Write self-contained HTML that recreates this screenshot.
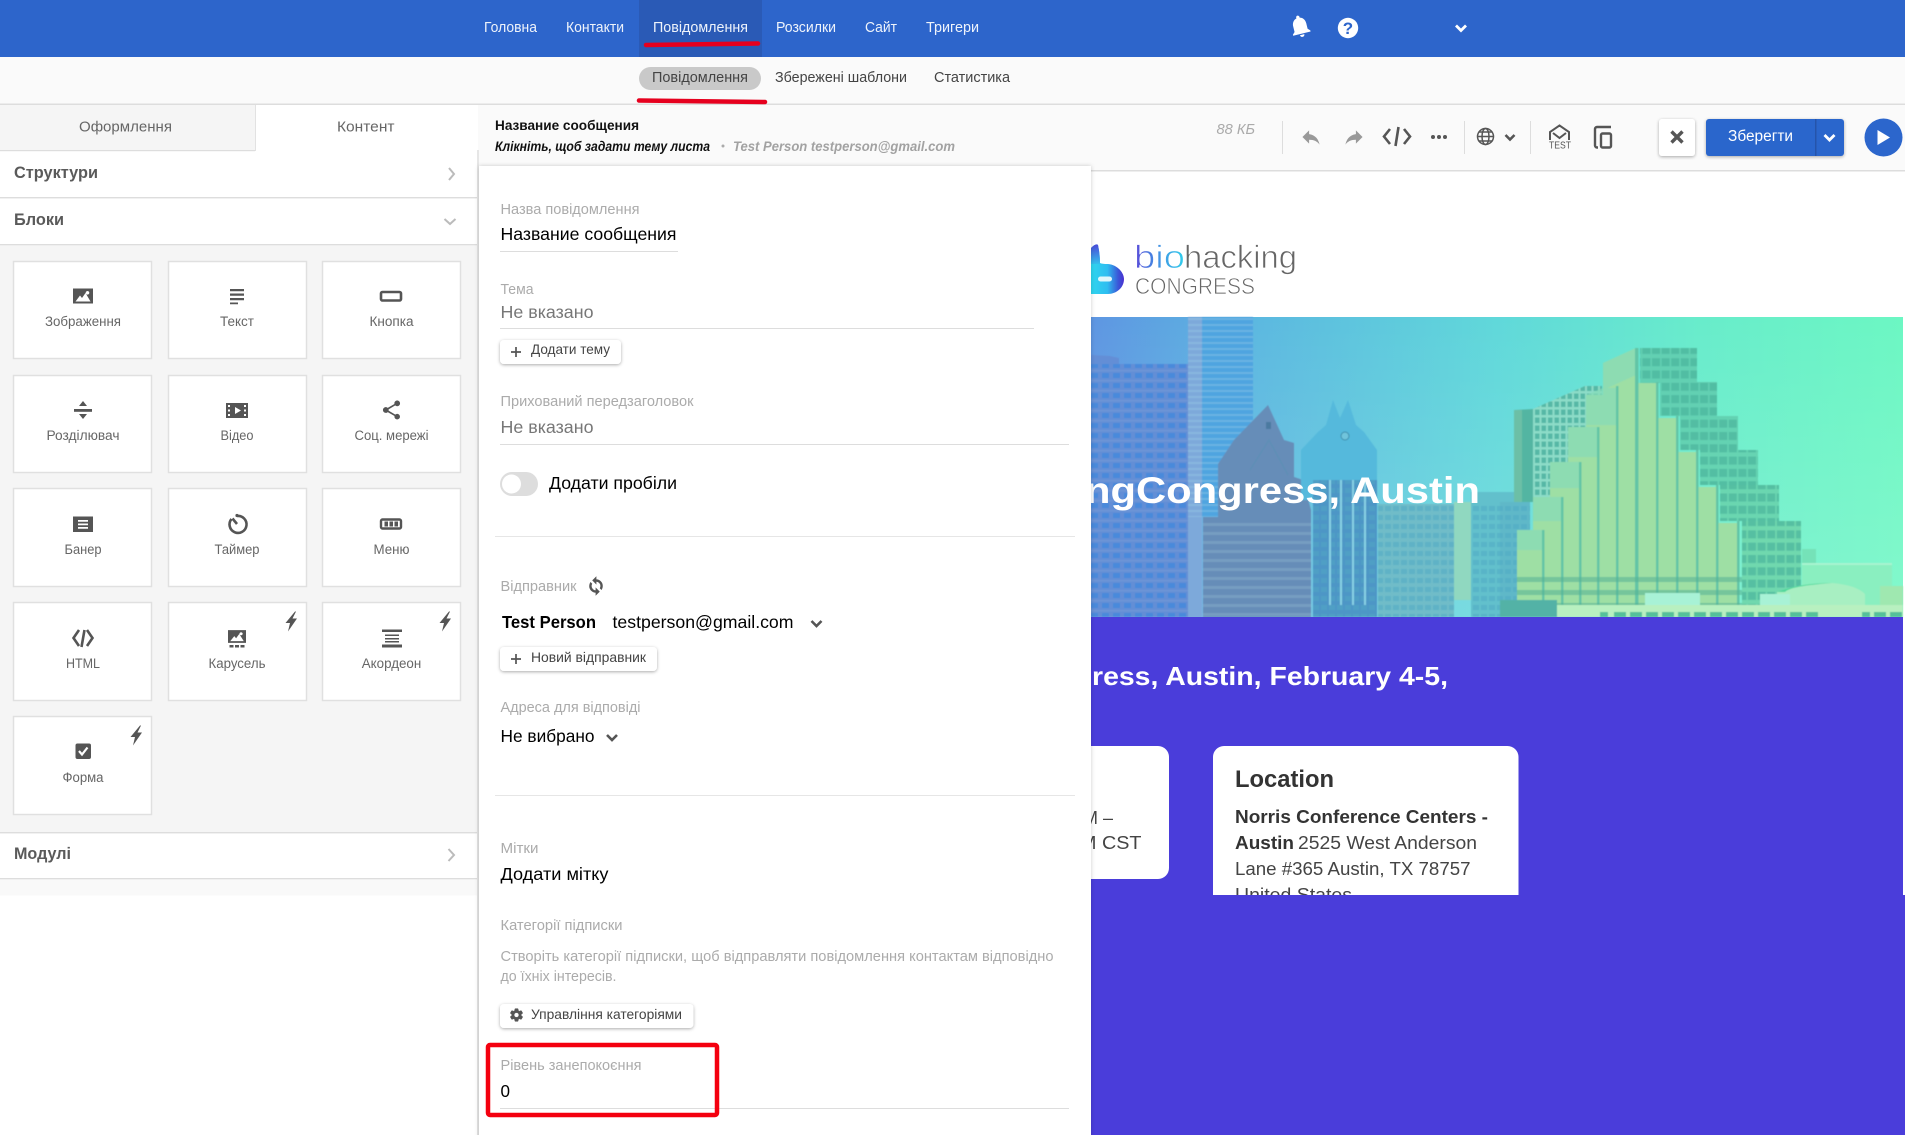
<!DOCTYPE html>
<html lang="uk">
<head>
<meta charset="utf-8">
<title>Повідомлення</title>
<style>
html,body{margin:0;padding:0;width:1905px;height:1135px;overflow:hidden;background:#fff}
svg{display:block}
text{font-family:"Liberation Sans",sans-serif;white-space:pre}
.nav{font-size:15px;fill:#eef3fb}
.sub{font-size:15px;fill:#444}
.tab{font-size:15px;fill:#666}
.h{font-size:17px;font-weight:bold;fill:#5a5a5a}
.c{font-size:13.4px;fill:#666}
.l{font-size:14.6px;fill:#ababab}
.v{font-size:17.5px;fill:#000}
.g{font-size:17.5px;fill:#777}
.b{font-size:13.6px;fill:#444}
.i{fill:#555}
.st{fill:none;stroke:#555;stroke-width:2}
.card{fill:#fff;stroke:#e0e0e0;stroke-width:1.5}
.ch{fill:none;stroke:#555;stroke-width:2.6}
.e{font-size:18px;fill:#444}
.eb{font-size:18px;font-weight:bold;fill:#333}
</style>
</head>
<body>
<svg width="1905" height="1135" viewBox="0 0 1905 1135" xmlns="http://www.w3.org/2000/svg">
<defs>
<filter id="s" x="-20%" y="-30%" width="140%" height="170%"><feDropShadow dx="0" dy="1" stdDeviation="1.5" flood-color="#000" flood-opacity=".33"/></filter>
<filter id="p" x="-3%" y="-3%" width="106%" height="106%"><feDropShadow dx="0" dy="0" stdDeviation="2" flood-color="#000" flood-opacity=".2"/></filter>
<filter id="soft" x="-2%" y="-2%" width="104%" height="104%"><feGaussianBlur stdDeviation=".6"/></filter>
<linearGradient id="hg" x1="0" y1="0" x2="1" y2="0"><stop offset="0" stop-color="#5e96e2"/><stop offset=".2" stop-color="#5cb8e0"/><stop offset=".5" stop-color="#60d8da"/><stop offset=".75" stop-color="#68eccb"/><stop offset="1" stop-color="#6cf7c3"/></linearGradient>
<linearGradient id="wash" x1="0" y1="0" x2="0" y2="1"><stop offset="0" stop-color="#fff" stop-opacity="0"/><stop offset="1" stop-color="#fff" stop-opacity=".16"/></linearGradient>
<linearGradient id="bio" x1="0" y1="0" x2="1" y2="0"><stop offset="0" stop-color="#5a46d8"/><stop offset=".3" stop-color="#4a7ae0"/><stop offset="1" stop-color="#30d0ec"/></linearGradient>
<linearGradient id="lg" x1="0" y1="0" x2="1" y2="0"><stop offset="0" stop-color="#2fd6ef"/><stop offset=".5" stop-color="#2fbdf0"/><stop offset=".82" stop-color="#3a58d8"/><stop offset="1" stop-color="#4a2fd0"/></linearGradient>
<linearGradient id="lg2" x1="0" y1="0" x2="0" y2="1"><stop offset="0" stop-color="#4a48d8"/><stop offset="1" stop-color="#34c0ee"/></linearGradient>
<pattern id="w1" width="11" height="10" patternUnits="userSpaceOnUse"><rect x="2" y="3" width="7" height="5" fill="#3f88dc" opacity=".75"/><rect x="0" y="0" width="11" height="1.2" fill="#7fa5d8" opacity=".4"/></pattern>
<pattern id="w2" width="20" height="9" patternUnits="userSpaceOnUse"><rect y="1" width="20" height="3" fill="#9cc4d8" opacity=".3"/></pattern>
<pattern id="w2b" width="20" height="6" patternUnits="userSpaceOnUse"><rect y="0" width="20" height="2" fill="#a8d8ec" opacity=".3"/></pattern>
<pattern id="w3" width="6.5" height="8" patternUnits="userSpaceOnUse"><rect x="1" y="1.500" width="4.500" height="5.500" fill="#3fa898" opacity=".7"/></pattern>
<pattern id="w4" width="9.600" height="12.300" patternUnits="userSpaceOnUse"><rect x=".8" y="1.500" width="8" height="8" fill="#48b39c" opacity=".65"/></pattern>
<pattern id="w5" width="8" height="9" patternUnits="userSpaceOnUse"><rect x="1" y="2" width="6" height="5" fill="#4fa8c4" opacity=".5"/></pattern>
<pattern id="b1" width="18" height="13" patternUnits="userSpaceOnUse"><rect y="5" width="18" height="5" fill="#58b494" opacity=".6"/></pattern>
<path id="bolt" d="M4.500-10 L-5 1.500 H-.5 L-2.500 10 L6.500-3 H2 L5.500-10Z"/>
<path id="pic" d="M-10-7.5 H10 V7.5 H-10Z M-7.500 5.500 H7.500 L2.500-3 L-1 2 L-3-.5Z M4.500-5 a1.800 1.800 0 1 0 .010 0Z" fill-rule="evenodd"/>
</defs>

<!-- email preview -->
<rect x="1091" y="171" width="812" height="146" fill="#fff"/>
<g>
<path d="M1091 248 Q1096 243 1098 245 Q1100 254 1100 263 Q1102 264 1108 264 C1118 265 1124 273 1124 279 C1124 288 1116 294 1108 294 H1091Z" fill="url(#lg)"/>
<path d="M1091 248 Q1096 243 1098 245 Q1100 254 1100 264 H1091Z" fill="url(#lg2)"/>
<rect x="1098" y="276.500" width="14" height="5" rx="2.500" fill="#dff6fb"/>
<text x="1134" y="268" font-size="32" textLength="51" lengthAdjust="spacingAndGlyphs" fill="url(#bio)" stroke="#fff" stroke-width=".8">bio</text>
<text x="1184" y="268" font-size="32" textLength="113" lengthAdjust="spacingAndGlyphs" fill="#666" stroke="#fff" stroke-width=".8">hacking</text>
<text x="1135" y="294" font-size="23" textLength="120" lengthAdjust="spacingAndGlyphs" fill="#666" stroke="#fff" stroke-width=".7">CONGRESS</text>
</g>
<!-- hero -->
<rect x="1091" y="317" width="812" height="300" fill="url(#hg)"/>
<rect x="1091" y="317" width="812" height="300" fill="url(#wash)"/>
<g filter="url(#soft)">
<!-- left block -->
<path d="M1091 355 L1110 356 L1119 358 V364 H1188 V617 H1091Z" fill="#648ed6"/>
<rect x="1091" y="364" width="97" height="253" fill="url(#w1)"/>
<!-- tall tower -->
<rect x="1188" y="317" width="14" height="300" fill="#7da9da"/>
<rect x="1202" y="317" width="51" height="200" fill="#4fa4e0"/>
<rect x="1188" y="317" width="65" height="200" fill="url(#w2b)"/>
<!-- pyramid -->
<path d="M1203 617 V517 H1218 V464 L1234 440 L1268 405 L1284 440 L1294 443 V477 L1303 480 L1311 510 V617Z" fill="#668db8"/>
<rect x="1203" y="517" width="108" height="100" fill="url(#w2)"/>
<path d="M1250 470 L1269 440 L1288 475" fill="none" stroke="#5f8fb6" stroke-width="1.500"/>
<rect x="1266" y="422" width="5" height="7" fill="#4c7aa0"/>
<!-- frost tower -->
<path d="M1301 450 L1318 432 L1326 425 L1333 400 L1340 418 L1348 400 L1356 425 L1364 432 L1377 450 V517 H1313 V500 H1301Z" fill="#55b9dc"/>
<rect x="1313" y="480" width="64" height="137" fill="#4e96c6"/>
<rect x="1313" y="480" width="64" height="137" fill="url(#w5)"/>
<rect x="1329" y="480" width="2" height="125" fill="#88d0e4"/><rect x="1340" y="480" width="2" height="125" fill="#88d0e4"/><rect x="1352" y="480" width="2" height="125" fill="#88d0e4"/><rect x="1364" y="480" width="2" height="125" fill="#88d0e4"/>
<circle cx="1345" cy="436" r="4" fill="#6fc4dc" stroke="#3f8fae" stroke-width="1"/>
<!-- mid -->
<rect x="1378" y="504" width="76" height="113" fill="#6fbcc8"/>
<rect x="1378" y="504" width="76" height="113" fill="url(#w5)"/>
<rect x="1454" y="502" width="17" height="98" fill="#90d8c0"/>
<rect x="1471" y="492" width="45" height="125" fill="#62c0cc"/>
<rect x="1471" y="505" width="45" height="112" fill="url(#w5)"/>
<rect x="1500" y="502" width="30" height="100" fill="#5fb8c8"/>
<rect x="1500" y="502" width="30" height="100" fill="url(#w5)"/>
<!-- dark slab + grid -->
<path d="M1514 410 L1533 409 V502 H1514Z" fill="#52b5a2"/>
<rect x="1514" y="410" width="8" height="92" fill="#6cbfa6"/>
<path d="M1533 409 L1585 386 H1602 V502 H1533Z" fill="#8cdcc8"/>
<path d="M1533 409 L1585 386 H1602 V502 H1533Z" fill="url(#w3)"/>
<!-- green window blocks -->
<rect x="1640" y="348" width="57" height="35" fill="#62d0b2"/><rect x="1640" y="348" width="57" height="35" fill="url(#w4)"/>
<rect x="1660" y="382" width="57" height="34" fill="#62d0b2"/><rect x="1660" y="382" width="57" height="34" fill="url(#w4)"/>
<rect x="1680" y="416" width="58" height="34" fill="#64d2b2"/><rect x="1680" y="416" width="58" height="34" fill="url(#w4)"/>
<rect x="1700" y="450" width="58" height="35" fill="#66d4b2"/><rect x="1700" y="450" width="58" height="35" fill="url(#w4)"/>
<rect x="1720" y="485" width="59" height="36" fill="#6ad6b0"/><rect x="1720" y="485" width="59" height="36" fill="url(#w4)"/>
<rect x="1742" y="521" width="59" height="84" fill="#70d8ae"/><rect x="1742" y="521" width="59" height="84" fill="url(#w4)"/>
<!-- tan columns -->
<g fill="#9edfa4">
<rect x="1517" y="530" width="26" height="80"/>
<rect x="1533" y="497" width="29" height="113"/>
<rect x="1550" y="462" width="30" height="148"/>
<rect x="1568" y="427" width="30" height="183"/>
<rect x="1586" y="395" width="31" height="215"/>
<path d="M1603 363 L1636 348 V610 H1603Z"/>
<rect x="1638" y="383" width="19" height="227"/>
<rect x="1658" y="418" width="19" height="192"/>
<rect x="1677" y="452" width="20" height="158"/>
<rect x="1697" y="487" width="20" height="123"/>
<rect x="1718" y="523" width="20" height="87"/>
</g>
<g fill="#86dcb8" opacity=".7">
<rect x="1517" y="530" width="26" height="20"/>
<rect x="1533" y="497" width="29" height="24"/>
<rect x="1550" y="462" width="30" height="26"/>
<rect x="1568" y="427" width="30" height="30"/>
<path d="M1586 395 L1603 388 H1617 V425 H1586Z"/>
<path d="M1603 363 L1636 348 V375 L1603 390Z"/>
</g>
<g fill="#62c4a6">
<rect x="1542" y="530" width="2.500" height="80"/><rect x="1561" y="497" width="2.500" height="113"/><rect x="1579" y="462" width="2.500" height="148"/><rect x="1597" y="427" width="2.500" height="183"/><rect x="1616" y="386" width="2.500" height="224"/><rect x="1635" y="348" width="3.500" height="262"/><rect x="1656" y="382" width="2.500" height="228"/><rect x="1676" y="416" width="2.500" height="194"/><rect x="1696" y="450" width="2.500" height="160"/><rect x="1716" y="485" width="2.500" height="125"/><rect x="1737" y="521" width="2.500" height="89"/>
</g>
<rect x="1517" y="570" width="225" height="36" fill="url(#b1)"/>
<!-- right low buildings -->
<rect x="1802" y="549" width="14" height="16" fill="#74e2b8"/>
<rect x="1802" y="563" width="90" height="42" fill="#8aefc0"/>
<rect x="1802" y="563" width="90" height="2" fill="#a8f4d0"/>
<rect x="1880" y="586" width="23" height="20" fill="#9fe8b0"/>
<path d="M1777 592 Q1800 583 1832 583 Q1856 585 1865 594 V605 H1777Z" fill="#a8efc2"/>
<path d="M1777 592 Q1800 583 1832 583 Q1790 586 1785 592Z" fill="#4fd89c"/>
<rect x="1645" y="593" width="55" height="13" fill="#a8f2d6"/>
<rect x="1760" y="594" width="30" height="12" fill="#a8f2d6"/>
<rect x="1500" y="600" width="57" height="17" fill="#52b2a6"/>
<rect x="1557" y="605" width="346" height="12" fill="#b8f0c0"/>
<g fill="#55c09a"><rect x="1600" y="612" width="8" height="5"/><rect x="1614" y="612" width="12" height="5"/><rect x="1630" y="612" width="12" height="5"/><rect x="1646" y="612" width="12" height="5"/><rect x="1662" y="612" width="12" height="5"/><rect x="1678" y="612" width="12" height="5"/><rect x="1694" y="612" width="12" height="5"/><rect x="1710" y="612" width="12" height="5"/><rect x="1726" y="612" width="12" height="5"/><rect x="1742" y="612" width="12" height="5"/><rect x="1758" y="612" width="12" height="5"/><rect x="1774" y="612" width="12" height="5"/><rect x="1790" y="612" width="12" height="5"/><rect x="1806" y="612" width="12" height="5"/><rect x="1862" y="612" width="8" height="5"/><rect x="1874" y="612" width="12" height="5"/><rect x="1890" y="612" width="12" height="5"/></g>
</g>
<text x="1085" y="503" font-size="37" font-weight="bold" fill="#fff" textLength="395" lengthAdjust="spacingAndGlyphs">ngCongress, Austin</text>
<!-- purple -->
<rect x="1091" y="617" width="812" height="278" fill="#4a3dda"/>
<text x="1092" y="685" font-size="26" font-weight="bold" fill="#fff" textLength="356" lengthAdjust="spacingAndGlyphs">ress, Austin, February 4-5,</text>
<rect x="1000" y="746" width="169" height="133" rx="11" fill="#fff"/>
<text class="e" x="1083" y="824" textLength="30" lengthAdjust="spacingAndGlyphs">M –</text>
<text class="e" x="1080" y="849" textLength="61.5" lengthAdjust="spacingAndGlyphs">M CST</text>
<path d="M1213 900 V757 a11 11 0 0 1 11-11 H1507.5 a11 11 0 0 1 11 11 V900Z" fill="#fff"/>
<text x="1235" y="787" font-size="24" font-weight="bold" fill="#333" textLength="99" lengthAdjust="spacingAndGlyphs">Location</text>
<text class="eb" x="1235" y="823" textLength="253" lengthAdjust="spacingAndGlyphs">Norris Conference Centers -</text>
<text class="eb" x="1235" y="849" textLength="59" lengthAdjust="spacingAndGlyphs">Austin</text>
<text class="e" x="1298" y="849" textLength="179" lengthAdjust="spacingAndGlyphs">2525 West Anderson</text>
<text class="e" x="1235" y="875" textLength="235.5" lengthAdjust="spacingAndGlyphs">Lane #365 Austin, TX 78757</text>
<text class="e" x="1235" y="901" textLength="117" lengthAdjust="spacingAndGlyphs">United States</text>
<rect x="1091" y="895" width="814" height="240" fill="#4a3dda"/>

<!-- top nav -->
<rect width="1905" height="57" fill="#2d65cb"/>
<rect x="639" width="123" height="57" fill="#2a5ab6"/>
<text class="nav" x="484" y="32" textLength="53" lengthAdjust="spacingAndGlyphs">Головна</text>
<text class="nav" x="566" y="32" textLength="58" lengthAdjust="spacingAndGlyphs">Контакти</text>
<text class="nav" x="653" y="32" textLength="95" lengthAdjust="spacingAndGlyphs">Повідомлення</text>
<text class="nav" x="776" y="32" textLength="60" lengthAdjust="spacingAndGlyphs">Розсилки</text>
<text class="nav" x="865" y="32" textLength="32" lengthAdjust="spacingAndGlyphs">Сайт</text>
<text class="nav" x="926" y="32" textLength="53" lengthAdjust="spacingAndGlyphs">Тригери</text>
<path d="M646 45 L758 43.5" stroke="#e6001e" stroke-width="4.5" stroke-linecap="round" fill="none"/>
<path transform="translate(1300 26) rotate(-14) scale(1.12 1.12) translate(-12 -12)" d="M12 22c1.100 0 2-.9 2-2h-4c0 1.100.9 2 2 2zm6-6v-5c0-3.070-1.640-5.640-4.500-6.320V4c0-.83-.67-1.500-1.500-1.500s-1.500.67-1.500 1.500v.68C7.630 5.360 6 7.920 6 11v5l-2 2v1h16v-1l-2-2z" fill="#fff"/>
<circle cx="1348" cy="28" r="10.200" fill="#fff"/>
<text x="1348" y="34" font-size="17" font-weight="bold" text-anchor="middle" style="fill:#2d65cb">?</text>
<path d="M1456 25.5 L1461 30.5 L1466 25.5" fill="none" stroke="#fff" stroke-width="2.8"/>

<!-- sub nav -->
<rect y="57" width="1905" height="47" fill="#fafafa"/>
<rect y="103.5" width="1905" height="1.5" fill="#ddd"/>
<rect x="639" y="67" width="122" height="23" rx="11.5" fill="#c9c9c9"/>
<text class="sub" x="652" y="82" textLength="96" lengthAdjust="spacingAndGlyphs">Повідомлення</text>
<text class="sub" x="775" y="82" textLength="132" lengthAdjust="spacingAndGlyphs">Збережені шаблони</text>
<text class="sub" x="934" y="82" textLength="76" lengthAdjust="spacingAndGlyphs">Статистика</text>
<path d="M639 100.5 L765 102" stroke="#e6001e" stroke-width="4.5" stroke-linecap="round" fill="none"/>

<!-- toolbar -->
<rect x="478" y="105" width="1427" height="65" fill="#fafafa"/>
<rect x="478" y="170" width="1427" height="1.5" fill="#ddd"/>
<text x="495" y="130" font-size="13.5" font-weight="bold" fill="#111" textLength="144" lengthAdjust="spacingAndGlyphs">Название сообщения</text>
<text x="495" y="151" font-size="13.5" font-weight="bold" font-style="italic" fill="#111" textLength="215" lengthAdjust="spacingAndGlyphs">Клікніть, щоб задати тему листа</text>
<circle cx="723" cy="146" r="1.5" fill="#aaa"/>
<text x="733" y="151" font-size="13.5" font-weight="bold" font-style="italic" fill="#a2a2a2" textLength="222" lengthAdjust="spacingAndGlyphs">Test Person testperson@gmail.com</text>
<text x="1216.5" y="134" font-size="14.6" font-style="italic" fill="#aaa" textLength="38.5" lengthAdjust="spacingAndGlyphs">88 КБ</text>
<rect x="1282" y="121" width="1" height="33" fill="#ddd"/>
<rect x="1464" y="121" width="1" height="33" fill="#ddd"/>
<rect x="1530" y="121" width="1" height="33" fill="#ddd"/>
<path transform="translate(1311 137) scale(.95) translate(-12 -12)" d="M10 9V5l-7 7 7 7v-4.100c5 0 8.500 1.600 11 5.100-1-5-4-10-11-11z" fill="#999"/>
<path transform="translate(1354 137) scale(-.95 .95) translate(-12 -12)" d="M10 9V5l-7 7 7 7v-4.100c5 0 8.500 1.600 11 5.100-1-5-4-10-11-11z" fill="#999"/>
<path d="M1390 129 L1384 136.5 L1390 144 M1404 129 L1410 136.5 L1404 144 M1398.5 127 L1395.5 146" class="st" style="stroke-width:2.6"/>
<circle cx="1433" cy="137" r="2" class="i"/><circle cx="1439" cy="137" r="2" class="i"/><circle cx="1445" cy="137" r="2" class="i"/>
<g class="st" style="stroke-width:1.5"><circle cx="1485.5" cy="136.5" r="8"/><ellipse cx="1485.5" cy="136.5" rx="3.5" ry="8"/><path d="M1477.5 136.5 H1493.5 M1478.5 132 H1492.5 M1478.5 141 H1492.5"/></g>
<path class="ch" d="M1505.5 135 L1510 139.5 L1514.5 135"/>
<path class="st" d="M1550 140 V132 L1559.5 125.5 L1569 132 V140 M1553 133 L1559.5 138 L1566 133"/>
<text x="1549" y="148.5" font-size="10" fill="#555" textLength="22" lengthAdjust="spacingAndGlyphs">TEST</text>
<path class="st" style="stroke-width:2.4" d="M1611 127 H1597 a2 2 0 0 0-2 2 V145.5 a2 2 0 0 0 2 2 H1598"/>
<rect class="st" style="stroke-width:2.4" x="1601" y="133.5" width="10" height="14" rx="1.5"/>
<rect x="1659" y="119" width="36" height="37" rx="3" fill="#fff" filter="url(#s)"/>
<path d="M1671.5 131.5 L1682.5 142.5 M1682.5 131.5 L1671.5 142.5" stroke="#555" stroke-width="3.4" fill="none"/>
<rect x="1706" y="119" width="138" height="37" rx="3" fill="#2c66cc" filter="url(#s)"/>
<rect x="1815" y="119" width="1.5" height="37" fill="#2554aa"/>
<text x="1728" y="141" font-size="15.5" fill="#fff" textLength="65" lengthAdjust="spacingAndGlyphs">Зберегти</text>
<path d="M1824.5 135 L1829.5 140 L1834.5 135" fill="none" stroke="#fff" stroke-width="2.8"/>
<circle cx="1883.5" cy="137.5" r="19" fill="#2c66cc"/>
<path d="M1877.5 130 L1890 137.5 L1877.5 145Z" fill="#fff"/>

<!-- sidebar -->
<rect y="105" width="478" height="790" fill="#fff"/>
<rect y="105" width="255" height="45" fill="#f5f5f5"/>
<rect y="150" width="255" height="1.2" fill="#ddd"/>
<rect x="255" y="105" width="1" height="46" fill="#e2e2e2"/>
<text class="tab" x="79" y="131.5" textLength="93" lengthAdjust="spacingAndGlyphs">Оформлення</text>
<text class="tab" x="337" y="131.5" textLength="57.5" lengthAdjust="spacingAndGlyphs">Контент</text>
<text class="h" x="14" y="178" textLength="84" lengthAdjust="spacingAndGlyphs">Структури</text>
<path d="M449 168 L454 174 L449 180" fill="none" stroke="#bbb" stroke-width="2"/>
<rect y="197" width="478" height="1.4" fill="#ddd"/>
<text class="h" x="14" y="225" textLength="50" lengthAdjust="spacingAndGlyphs">Блоки</text>
<path d="M444.5 219 L450 224 L455.5 219" fill="none" stroke="#bbb" stroke-width="2"/>
<rect y="244" width="478" height="1.4" fill="#ddd"/>
<rect y="245.4" width="478" height="586.6" fill="#f5f5f5"/>
<rect y="832" width="478" height="1.4" fill="#ddd"/>
<text class="h" x="14" y="859" textLength="57" lengthAdjust="spacingAndGlyphs">Модулі</text>
<path d="M448.5 849 L454 855 L448.5 861" fill="none" stroke="#bbb" stroke-width="2"/>
<rect y="878" width="478" height="1.4" fill="#ddd"/>
<rect y="879.4" width="478" height="16" fill="#f9f9f9"/>
<rect x="477" y="150" width="2" height="985" fill="#e6e6e6"/>

<!-- block cards -->
<g>
<rect class="card" x="13.5" y="261.5" width="138" height="97"/><rect class="card" x="168.5" y="261.5" width="138" height="97"/><rect class="card" x="322.5" y="261.5" width="138" height="97"/>
<rect class="card" x="13.5" y="375.5" width="138" height="97"/><rect class="card" x="168.5" y="375.5" width="138" height="97"/><rect class="card" x="322.5" y="375.5" width="138" height="97"/>
<rect class="card" x="13.5" y="488.5" width="138" height="98"/><rect class="card" x="168.5" y="488.5" width="138" height="98"/><rect class="card" x="322.5" y="488.5" width="138" height="98"/>
<rect class="card" x="13.5" y="602.5" width="138" height="98"/><rect class="card" x="168.5" y="602.5" width="138" height="98"/><rect class="card" x="322.5" y="602.5" width="138" height="98"/>
<rect class="card" x="13.5" y="716.5" width="138" height="98"/>
</g>
<g text-anchor="middle">
<text class="c" x="83" y="326" textLength="76" lengthAdjust="spacingAndGlyphs">Зображення</text>
<text class="c" x="237" y="326" textLength="34" lengthAdjust="spacingAndGlyphs">Текст</text>
<text class="c" x="391.5" y="326" textLength="44" lengthAdjust="spacingAndGlyphs">Кнопка</text>
<text class="c" x="83" y="440" textLength="73" lengthAdjust="spacingAndGlyphs">Розділювач</text>
<text class="c" x="237" y="440" textLength="33" lengthAdjust="spacingAndGlyphs">Відео</text>
<text class="c" x="391.5" y="440" textLength="74" lengthAdjust="spacingAndGlyphs">Соц. мережі</text>
<text class="c" x="83" y="554" textLength="37" lengthAdjust="spacingAndGlyphs">Банер</text>
<text class="c" x="237" y="554" textLength="45" lengthAdjust="spacingAndGlyphs">Таймер</text>
<text class="c" x="391.5" y="554" textLength="36" lengthAdjust="spacingAndGlyphs">Меню</text>
<text class="c" x="83" y="668" textLength="34" lengthAdjust="spacingAndGlyphs">HTML</text>
<text class="c" x="237" y="668" textLength="57" lengthAdjust="spacingAndGlyphs">Карусель</text>
<text class="c" x="391.5" y="668" textLength="59.5" lengthAdjust="spacingAndGlyphs">Акордеон</text>
<text class="c" x="83" y="782" textLength="41" lengthAdjust="spacingAndGlyphs">Форма</text>
</g>
<!-- card icons -->
<use href="#pic" x="83" y="296" class="i"/>
<path class="i" d="M230 289 H244 V291.200 H230Z M230 293.500 H244 V295.700 H230Z M230 298 H244 V300.200 H230Z M230 302.500 H238 V304.200 H230Z"/>
<rect class="st" style="stroke-width:2.6" x="381" y="292" width="20" height="8.5" rx="1.5"/>
<g class="i"><rect x="74" y="409" width="18" height="2.8"/><path d="M83 401 L87 406 H79Z M83 419 L87 414 H79Z"/></g>
<path class="i" fill-rule="evenodd" d="M226 403 H248 V418 H226Z M228 405 v2 h2 v-2Z M228 409.500 v2 h2 v-2Z M228 414 v2 h2 v-2Z M244 405 v2 h2 v-2Z M244 409.500 v2 h2 v-2Z M244 414 v2 h2 v-2Z M235 407 v7 l6-3.500Z"/>
<path class="i" transform="translate(391.500 410) scale(.95) translate(-12 -12)" d="M18 16.080c-.760 0-1.440.3-1.960.770L8.910 12.700c.050-.230.090-.460.090-.7s-.040-.470-.090-.7l7.050-4.110c.540.500 1.250.810 2.040.810 1.660 0 3-1.340 3-3s-1.340-3-3-3-3 1.340-3 3c0 .240.040.470.090.7L8.040 9.810C7.500 9.310 6.790 9 6 9c-1.660 0-3 1.340-3 3s1.340 3 3 3c.790 0 1.500-.310 2.040-.810l7.120 4.160c-.050.210-.080.430-.080.650 0 1.610 1.310 2.920 2.920 2.920s2.920-1.310 2.920-2.920-1.310-2.920-2.920-2.920z"/>
<path class="i" fill-rule="evenodd" d="M73 516.500 H93 V532 H73Z M78 520 v1.800 h10 v-1.800Z M78 523.500 v1.800 h10 v-1.800Z M78 527 v1.800 h10 v-1.800Z"/>
<g class="st" style="stroke-width:2.600"><path d="M231.500 519 A8.500 8.500 0 1 0 237 516"/><path d="M237 524 L232.500 518.500"/></g>
<circle cx="237" cy="515.500" r="1.600" class="i"/>
<rect class="st" style="stroke-width:2.400" x="381" y="519.500" width="20" height="9" rx="1.500"/>
<path class="i" d="M384.500 521.500 h3.500 v5 h-3.500Z M389.500 521.500 h3.500 v5 h-3.500Z M394.500 521.500 h3.500 v5 h-3.500Z"/>
<path class="st" style="stroke-width:2.600" d="M79 630 L73.500 638 L79 646 M87 630 L92.500 638 L87 646 M84.500 630 L81.500 647"/>
<g class="i"><path fill-rule="evenodd" transform="translate(237 636.500) scale(.9 .85)" d="M-10-7.500 H10 V7.500 H-10Z M-7.500 5.500 H7.500 L2.500-3 L-1 2 L-3-.5Z M4.500-5 a1.800 1.800 0 1 0 .010 0Z"/><rect x="229.500" y="645" width="4" height="2.500"/><rect x="235" y="645" width="4" height="2.500"/><rect x="240.500" y="645" width="4" height="2.500"/></g>
<path class="i" d="M382 629.500 H402 V632 H382Z M385 634.500 H399 V636 H385Z M385 638 H399 V639.500 H385Z M385 641 H399 V642.500 H385Z M382 644.500 H402 V647.500 H382Z"/>
<rect class="i" x="75.500" y="743.500" width="15.500" height="15.500" rx="2"/>
<path d="M79 751 L82 754.500 L87.500 747.500" fill="none" stroke="#fff" stroke-width="2.200"/>
<use href="#bolt" x="290.500" y="621.500" class="i"/>
<use href="#bolt" x="444.500" y="621.500" class="i"/>
<use href="#bolt" x="135.500" y="735.500" class="i"/>

<!-- settings panel -->
<rect x="479" y="166" width="612" height="975" fill="#fff" filter="url(#p)"/>
<text class="l" x="500.500" y="214" textLength="139" lengthAdjust="spacingAndGlyphs">Назва повідомлення</text>
<text class="v" x="500.500" y="240" textLength="176" lengthAdjust="spacingAndGlyphs">Название сообщения</text>
<rect x="500" y="251" width="178" height="1" fill="#ddd"/>
<text class="l" x="500.500" y="294" textLength="33" lengthAdjust="spacingAndGlyphs">Тема</text>
<text class="g" x="500.500" y="318" textLength="93" lengthAdjust="spacingAndGlyphs">Не вказано</text>
<rect x="500" y="328" width="534" height="1" fill="#ddd"/>
<rect x="500" y="340" width="121" height="24" rx="4" fill="#fff" filter="url(#s)"/>
<path d="M511 352 H521 M516 347 V357" stroke="#555" stroke-width="1.700" fill="none"/>
<text class="b" x="531" y="354" textLength="79" lengthAdjust="spacingAndGlyphs">Додати тему</text>
<text class="l" x="500.500" y="406" textLength="193" lengthAdjust="spacingAndGlyphs">Прихований передзаголовок</text>
<text class="g" x="500.500" y="433" textLength="93" lengthAdjust="spacingAndGlyphs">Не вказано</text>
<rect x="500" y="444" width="569" height="1" fill="#ddd"/>
<rect x="500" y="472" width="38" height="24" rx="12" fill="#ddd"/>
<circle cx="511.500" cy="484" r="9.500" fill="#fff"/>
<text class="v" x="549" y="489" textLength="128" lengthAdjust="spacingAndGlyphs">Додати пробіли</text>
<rect x="495" y="536" width="580" height="1" fill="#e6e6e6"/>
<text class="l" x="500.500" y="591" textLength="76" lengthAdjust="spacingAndGlyphs">Відправник</text>
<path class="i" stroke="#555" stroke-width="1" transform="translate(596 586) scale(.8) translate(-12 -12)" d="M12 4V1L8 5l4 4V6c3.310 0 6 2.690 6 6 0 1.010-.250 1.970-.7 2.800l1.460 1.460C19.540 15.030 20 13.570 20 12c0-4.420-3.580-8-8-8zm0 14c-3.310 0-6-2.690-6-6 0-1.010.250-1.970.7-2.800L5.240 7.740C4.460 8.970 4 10.430 4 12c0 4.420 3.580 8 8 8v3l4-4-4-4v3z"/>
<text class="v" x="502" y="628" font-weight="bold" textLength="94" lengthAdjust="spacingAndGlyphs">Test Person</text>
<text class="v" x="612.500" y="628" textLength="181" lengthAdjust="spacingAndGlyphs">testperson@gmail.com</text>
<path class="ch" d="M811.500 621 L816.500 626 L821.500 621"/>
<rect x="500" y="647" width="157" height="24" rx="4" fill="#fff" filter="url(#s)"/>
<path d="M511 659 H521 M516 654 V664" stroke="#555" stroke-width="1.700" fill="none"/>
<text class="b" x="531" y="662" textLength="115" lengthAdjust="spacingAndGlyphs">Новий відправник</text>
<text class="l" x="500.500" y="712" textLength="140" lengthAdjust="spacingAndGlyphs">Адреса для відповіді</text>
<text class="v" x="500.500" y="742" textLength="94" lengthAdjust="spacingAndGlyphs">Не вибрано</text>
<path class="ch" d="M607 735 L612 740 L617 735"/>
<rect x="495" y="795" width="580" height="1" fill="#e6e6e6"/>
<text class="l" x="500.500" y="853" textLength="38" lengthAdjust="spacingAndGlyphs">Мітки</text>
<text class="v" x="500.500" y="880" textLength="108" lengthAdjust="spacingAndGlyphs">Додати мітку</text>
<text class="l" x="500.500" y="930" textLength="122" lengthAdjust="spacingAndGlyphs">Категорії підписки</text>
<text class="l" x="500.500" y="961" font-size="14" textLength="553" lengthAdjust="spacingAndGlyphs">Створіть категорії підписки, щоб відправляти повідомлення контактам відповідно</text>
<text class="l" x="500.500" y="981" font-size="14" textLength="116" lengthAdjust="spacingAndGlyphs">до їхніх інтересів.</text>
<rect x="500" y="1004" width="193.500" height="24" rx="4" fill="#fff" filter="url(#s)"/>
<path class="i" stroke="#555" stroke-width=".7" transform="translate(516.500 1015) scale(.66) translate(-12 -12)" d="M19.140 12.940c.040-.3.060-.610.060-.940 0-.320-.020-.640-.070-.940l2.030-1.580c.180-.140.230-.410.120-.610l-1.920-3.320c-.120-.220-.370-.290-.590-.220l-2.390.960c-.5-.380-1.030-.7-1.620-.940l-.360-2.540c-.040-.240-.240-.410-.480-.410h-3.840c-.240 0-.430.170-.470.410l-.360 2.540c-.590.240-1.130.570-1.620.940l-2.390-.960c-.220-.080-.470 0-.590.220L2.740 8.870c-.120.210-.080.470.120.610l2.030 1.580c-.050.3-.090.630-.090.940s.020.640.070.940l-2.030 1.580c-.180.140-.230.410-.120.610l1.920 3.320c.120.220.370.290.590.220l2.390-.960c.5.380 1.030.7 1.620.94l.360 2.540c.050.240.240.410.480.410h3.840c.240 0 .440-.17.470-.41l.360-2.540c.590-.240 1.130-.560 1.620-.94l2.390.96c.220.080.470 0 .590-.22l1.920-3.320c.120-.220.070-.470-.120-.61l-2.010-1.580zM12 15.600c-1.980 0-3.600-1.620-3.600-3.600s1.620-3.600 3.600-3.600 3.600 1.620 3.600 3.600-1.620 3.600-3.600 3.600z"/>
<text class="b" x="531" y="1019" textLength="151" lengthAdjust="spacingAndGlyphs">Управління категоріями</text>
<text class="l" x="500.500" y="1070" textLength="141" lengthAdjust="spacingAndGlyphs">Рівень занепокоєння</text>
<text class="v" x="500.500" y="1097" textLength="9.500" lengthAdjust="spacingAndGlyphs">0</text>
<rect x="500" y="1108" width="569" height="1" fill="#ddd"/>
<rect x="488" y="1045" width="229" height="70" rx="2" fill="none" stroke="#f4000f" stroke-width="4.500"/>
</svg>
</body>
</html>
